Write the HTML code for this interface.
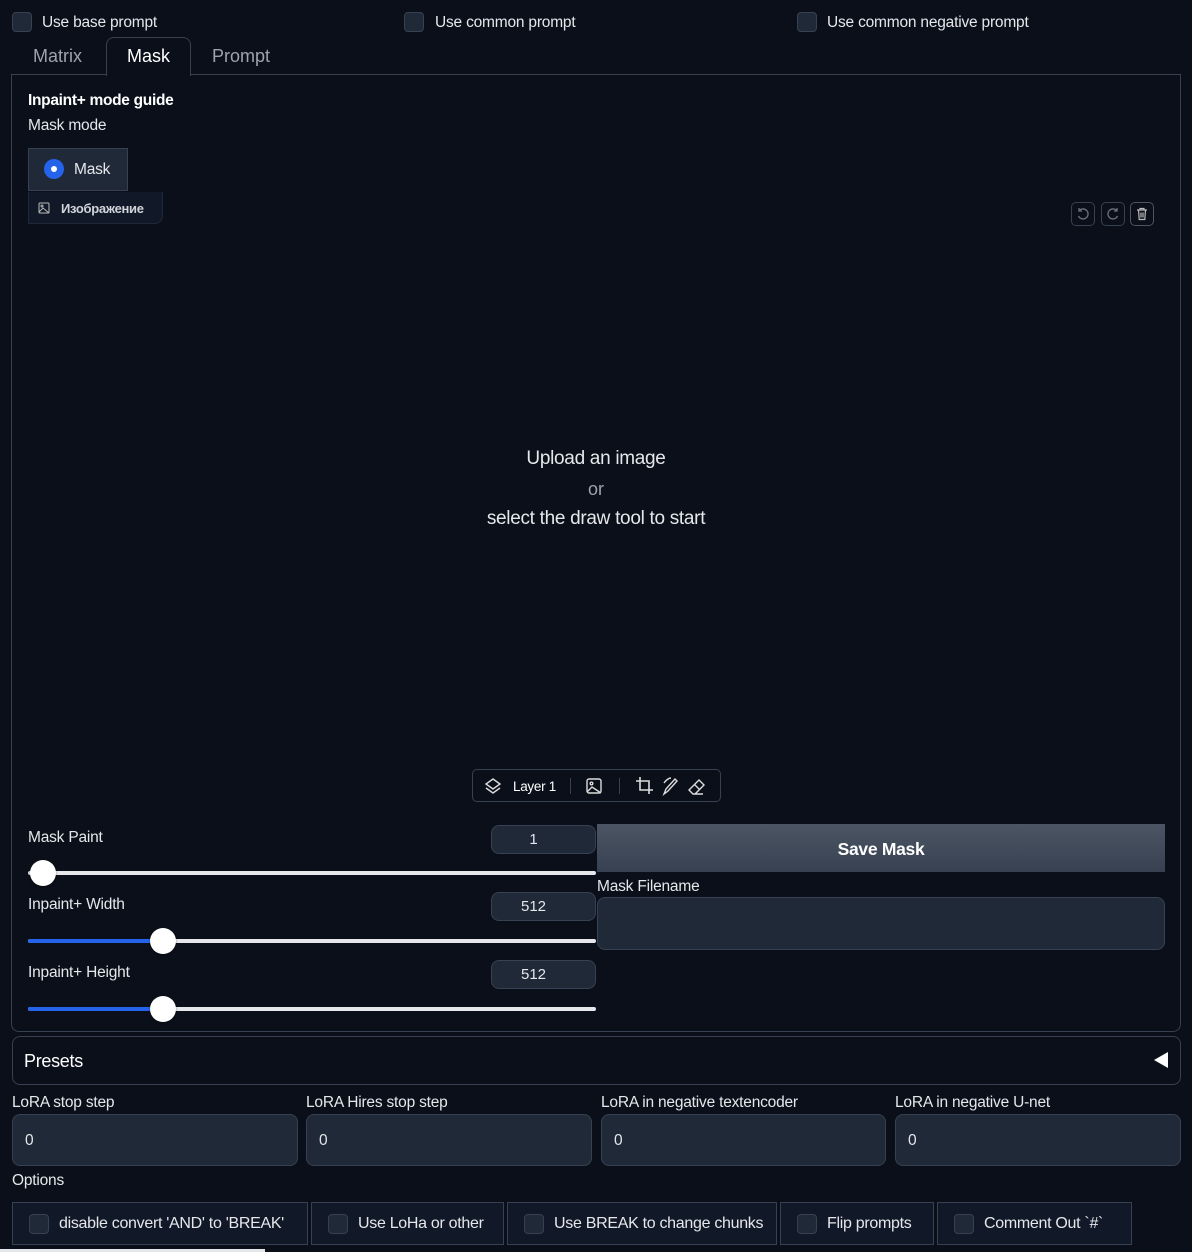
<!DOCTYPE html>
<html><head><meta charset="utf-8"><style>
*{box-sizing:border-box;margin:0;padding:0}
body{width:1192px;height:1252px;background:#0b0f19;color:#e5e7eb;font-family:"Liberation Sans",sans-serif;font-size:16px;position:relative;overflow:hidden}
.a{position:absolute;white-space:nowrap}
.cb{position:absolute;width:20px;height:20px;border:1px solid #374151;background:#1f2937;border-radius:4px}
.t{font-size:15.5px;letter-spacing:-0.2px}
.box{position:absolute;border:1px solid #374151;background:#1f2937;border-radius:8px}
.num{position:absolute;border:1px solid #374151;background:#1f2937;border-radius:8px;text-align:center;font-size:15px;line-height:27px;width:105px;height:29px;left:491px;padding-right:20px}
.track{position:absolute;height:4px;background:#e5e7eb;left:28px;width:568px;border-radius:2px}
.fill{position:absolute;height:4px;background:#2563eb;left:28px;border-radius:2px}
.thumb{position:absolute;width:26px;height:26px;border-radius:50%;background:#fff;box-shadow:0 1px 2px #0006}
.ob{position:absolute;top:1202px;height:43px;border:1px solid #374151;background:#111827}
.ob .cb{left:16px;top:11px}
.ob span{position:absolute;left:46px;top:12px;font-size:16px;letter-spacing:-0.3px}
.ib{position:absolute;top:202px;width:24px;height:24px;border:1px solid #374151;border-radius:5px}
</style></head><body>
<div class="cb" style="left:12px;top:12px"></div><div class="a t" style="left:42px;top:14px">Use base prompt</div>
<div class="cb" style="left:404px;top:12px"></div><div class="a t" style="left:435px;top:14px">Use common prompt</div>
<div class="cb" style="left:797px;top:12px"></div><div class="a t" style="left:827px;top:14px">Use common negative prompt</div>

<div class="a" style="left:33px;top:46px;font-size:18px;color:#9ca3af">Matrix</div>
<div class="a" style="left:106px;top:37px;width:85px;height:39px;border:1px solid #374151;border-bottom:none;border-radius:8px 8px 0 0;background:#0b0f19;z-index:2"></div>
<div class="a" style="left:127px;top:46px;font-size:18px;color:#fff;z-index:3">Mask</div>
<div class="a" style="left:212px;top:46px;font-size:18px;color:#9ca3af">Prompt</div>
<div class="a" style="left:11px;top:74px;width:1170px;height:958px;border:1px solid #374151;border-radius:0 0 8px 8px"></div>

<div class="a" style="left:28px;top:92px;font-weight:bold;font-size:15.5px;color:#fff;letter-spacing:-0.3px">Inpaint+ mode guide</div>
<div class="a t" style="left:28px;top:117px">Mask mode</div>
<div class="a" style="left:28px;top:148px;width:100px;height:43px;border:1px solid #374151;background:#1f2937"></div>
<div class="a" style="left:44px;top:159px;width:20px;height:20px;border-radius:50%;background:#2563eb"></div>
<div class="a" style="left:51px;top:166px;width:6px;height:6px;border-radius:50%;background:#fff"></div>
<div class="a t" style="left:74px;top:161px">Mask</div>
<div class="a" style="left:28px;top:192px;width:135px;height:32px;background:#111827;border:1px solid #1f2937;border-top:none;border-radius:0 0 8px 0"></div>
<svg class="a" style="left:38px;top:202px" width="12" height="12" viewBox="0 0 12 12" fill="none" stroke="#bbb" stroke-width="1"><rect x="1" y="1" width="10" height="10" rx="1"/><circle cx="4" cy="4" r="1"/><path d="M1 10l4-4 6 5"/></svg>
<div class="a" style="left:61px;top:201px;font-size:13px;font-weight:bold;color:#d1d5db;letter-spacing:-0.3px">Изображение</div>

<div class="ib" style="left:1071px"></div><div class="ib" style="left:1101px"></div><div class="ib" style="left:1130px;border-color:#4b5563"></div>
<svg class="a" style="left:1076px;top:207px" width="14" height="14" viewBox="0 0 14 14" fill="none" stroke="#6b7280" stroke-width="1.3"><path d="M3 4a5 5 0 1 1 -0.5 5"/><path d="M3 1v3h3"/></svg>
<svg class="a" style="left:1106px;top:207px" width="14" height="14" viewBox="0 0 14 14" fill="none" stroke="#6b7280" stroke-width="1.3"><path d="M11 4a5 5 0 1 0 0.5 5"/><path d="M11 1v3h-3"/></svg>
<svg class="a" style="left:1135px;top:207px" width="14" height="14" viewBox="0 0 14 14" fill="none" stroke="#bbb" stroke-width="1.2"><path d="M2 3h10M5 3V1.5h4V3M3.5 3l.7 9.5h5.6l.7-9.5M6 5.5v5M8 5.5v5"/></svg>

<div class="a" style="left:0;width:1192px;top:448px;text-align:center;font-size:19px;color:#e5e7eb;letter-spacing:-0.3px">Upload an image</div>
<div class="a" style="left:0;width:1192px;top:479px;text-align:center;font-size:18px;color:#9ca3af">or</div>
<div class="a" style="left:0;width:1192px;top:508px;text-align:center;font-size:19px;color:#e5e7eb;letter-spacing:-0.3px">select the draw tool to start</div>

<div class="a" style="left:472px;top:769px;width:249px;height:33px;border:1px solid #374151;border-radius:5px"></div>
<svg class="a" style="left:484px;top:777px" width="18" height="18" viewBox="0 0 18 18" fill="none" stroke="#ddd" stroke-width="1.4"><path d="M9 2l7 5-7 5-7-5z"/><path d="M2 11l7 5 7-5"/></svg>
<div class="a" style="left:513px;top:779px;font-size:13.5px;color:#fff;letter-spacing:-0.3px">Layer 1</div>
<div class="a" style="left:570px;top:778px;width:1px;height:16px;background:#374151"></div>
<svg class="a" style="left:585px;top:777px" width="18" height="18" viewBox="0 0 18 18" fill="none" stroke="#ddd" stroke-width="1.4"><rect x="2" y="2" width="14" height="14" rx="2"/><circle cx="6.5" cy="6.5" r="1.3"/><path d="M2 15l5-5 9 6"/></svg>
<div class="a" style="left:619px;top:778px;width:1px;height:16px;background:#374151"></div>
<svg class="a" style="left:635px;top:776px" width="20" height="20" viewBox="0 0 20 20" fill="none" stroke="#ddd" stroke-width="1.6"><path d="M5 1v13h13M1 5h13v13"/></svg>
<svg class="a" style="left:661px;top:776px" width="20" height="20" viewBox="0 0 20 20" fill="none" stroke="#ddd" stroke-width="1.4"><path d="M3 18l2-5 9-10 2 2-9 10z"/><path d="M3 7c2-3 5-5 7-5"/></svg>
<svg class="a" style="left:686px;top:776px" width="20" height="20" viewBox="0 0 20 20" fill="none" stroke="#ddd" stroke-width="1.4"><path d="M7 18l-4-4 10-10 5 5-9 9zM8 8l5 5M7 18h10"/></svg>

<div class="a t" style="left:28px;top:829px">Mask Paint</div>
<div class="num" style="top:825px">1</div>
<div class="track" style="top:871px"></div>
<div class="thumb" style="left:30px;top:860px"></div>
<div class="a t" style="left:28px;top:896px">Inpaint+ Width</div>
<div class="num" style="top:892px">512</div>
<div class="track" style="top:939px"></div><div class="fill" style="top:939px;width:135px"></div>
<div class="thumb" style="left:150px;top:928px"></div>
<div class="a t" style="left:28px;top:964px">Inpaint+ Height</div>
<div class="num" style="top:960px">512</div>
<div class="track" style="top:1007px"></div><div class="fill" style="top:1007px;width:135px"></div>
<div class="thumb" style="left:150px;top:996px"></div>

<div class="a" style="left:597px;top:824px;width:568px;height:48px;background:linear-gradient(#4b5563,#374151);text-align:center;line-height:50px;font-weight:bold;font-size:17.5px;color:#fff;letter-spacing:-0.3px">Save Mask</div>
<div class="a t" style="left:597px;top:878px">Mask Filename</div>
<div class="box" style="left:597px;top:897px;width:568px;height:53px"></div>

<div class="a" style="left:12px;top:1036px;width:1169px;height:49px;border:1px solid #374151;border-radius:8px"></div>
<div class="a" style="left:24px;top:1051px;font-size:18px;color:#fff;letter-spacing:-0.3px">Presets</div>
<div class="a" style="left:1154px;top:1052px;width:0;height:0;border-top:8px solid transparent;border-bottom:8px solid transparent;border-right:14px solid #fff"></div>

<div class="a t" style="left:12px;top:1094px">LoRA stop step</div>
<div class="a t" style="left:306px;top:1094px">LoRA Hires stop step</div>
<div class="a t" style="left:601px;top:1094px">LoRA in negative textencoder</div>
<div class="a t" style="left:895px;top:1094px">LoRA in negative U-net</div>
<div class="box" style="left:12px;top:1114px;width:286px;height:52px"></div><div class="a t" style="left:25px;top:1132px">0</div>
<div class="box" style="left:306px;top:1114px;width:286px;height:52px"></div><div class="a t" style="left:319px;top:1132px">0</div>
<div class="box" style="left:601px;top:1114px;width:285px;height:52px"></div><div class="a t" style="left:614px;top:1132px">0</div>
<div class="box" style="left:895px;top:1114px;width:286px;height:52px"></div><div class="a t" style="left:908px;top:1132px">0</div>
<div class="a t" style="left:12px;top:1172px">Options</div>

<div class="ob" style="left:12px;width:296px"><div class="cb"></div><span>disable convert 'AND' to 'BREAK'</span></div>
<div class="ob" style="left:311px;width:193px"><div class="cb"></div><span>Use LoHa or other</span></div>
<div class="ob" style="left:507px;width:270px"><div class="cb"></div><span>Use BREAK to change chunks</span></div>
<div class="ob" style="left:780px;width:154px"><div class="cb"></div><span>Flip prompts</span></div>
<div class="ob" style="left:937px;width:195px"><div class="cb"></div><span>Comment Out `#`</span></div>
<div class="a" style="left:0;top:1249px;width:265px;height:3px;background:#e5e7eb"></div>
</body></html>
